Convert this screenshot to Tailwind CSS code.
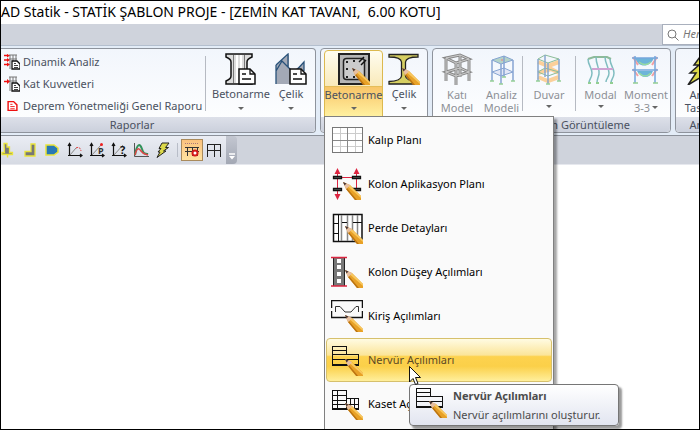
<!DOCTYPE html>
<html lang="tr">
<head>
  <meta charset="UTF-8" />
  <meta name="viewport" content="width=device-width, initial-scale=1.0"/>
  <title>STATİK ŞABLON PROJE</title>
  <script src="https://cdn.jsdelivr.net/npm/@tailwindcss/browser@4"></script>
</head>
<body class="bg-white font-['Noto_Sans','Open_Sans',sans-serif] text-[11px] text-[#4a5160]">

  <!-- shared shapes -->
  <svg class="hidden">
    <symbol id="pencil" viewBox="0 0 18 18">
      <path d="M0 0L7 3L18 14V18H12L3 7Z" fill="#e8a127"/>
      <path d="M6.500 3L18 14V16L5 4.500Z" fill="#f8c860"/>
      <path d="M3 7L12 18H14L4 6Z" fill="#bb7412"/>
      <path d="M0 0L7 3L5.500 5L3 7Z" fill="#e6bfa2"/>
      <path d="M0 0L3.500 1.500L1.500 3.500Z" fill="#4a3636"/>
    </symbol>
    <symbol id="doc" viewBox="0 0 18 17">
      <path d="M1 1H12L17 6V16H1Z" fill="#fff" stroke="#111" stroke-width="1.500"/>
      <path d="M12 1V6H17M4 6H8M4 11H13" fill="none" stroke="#111" stroke-width="1.300"/>
    </symbol>
    <symbol id="smalldoc" viewBox="0 0 10 10">
      <path d="M1 1H6L9 4V9H1Z" fill="#fff" stroke="currentColor" stroke-width="1.300"/>
      <path d="M3 3.500H5M3 5.500H7M3 7.500H7" stroke="currentColor" stroke-width="0.800"/>
    </symbol>
    <symbol id="ribs" viewBox="0 0 32 32">
      <path d="M1 2H15V21H1ZM1 6H15M1 10H27M1 14H27M15 10H27V21" fill="none" stroke="#111" stroke-width="1" transform="translate(.5 .5)" shape-rendering="crispEdges"/>
      <path d="M2 15H15V20H2Z" fill="#fff"/>
      <path d="M15.500 10V21" stroke="#fff" transform="translate(0 1)" opacity="0.600"/>
      <path d="M1 21H28" stroke="#111" stroke-width="2"/>
      <use href="#pencil" x="14" y="15" width="18" height="18"/>
    </symbol>
    <symbol id="axes" viewBox="0 0 16 16">
      <path d="M2.500 2V13.500H15M1 4L2.500 1.500L4 4M13 12L15 13.500L13 15M1 13.500H4" fill="none" stroke="#111" stroke-width="1.200"/>
    </symbol>
    <symbol id="bolt" viewBox="0 0 16 16">
      <path d="M7 1H14L10.500 5.500H13.500L8.500 9H11L2 15.500L5 10H3L6 6.500H4Z" fill="#dcd94a" stroke="#222" stroke-width="1"/>
    </symbol>
    <symbol id="arrow" viewBox="0 0 6 3"><path d="M0 0H6L3 3Z" fill="#666"/></symbol>
  </svg>

  <div class="flex h-screen flex-col overflow-hidden border border-black">
    <header class="h-[23px] shrink-0 text-sm leading-[21px] whitespace-pre text-black">AD Statik - STATİK ŞABLON PROJE - [ZEMİN KAT TAVANI,  6.00 KOTU]</header>

    <div class="flex h-[22px] shrink-0 justify-end border-b border-[#b4bfce] bg-[#cfd3dc]">
      <label class="flex w-[37px] items-center gap-1 overflow-hidden border border-r-0 border-[#a9b0bd] bg-white pl-1">
        <svg class="size-3 shrink-0" viewBox="0 0 12 12" fill="none" stroke="#777"><circle cx="5" cy="5" r="4"/><path d="M8 8L11.500 11.500"/></svg>
        <input type="text" aria-label="Ara" placeholder="Herhangi" class="w-16 shrink-0 italic placeholder:text-[#777]">
      </label>
    </div>

    <!-- ribbon -->
    <div class="flex shrink-0 gap-1 overflow-x-clip border-b border-[#8b9099] bg-[#e3ecf7] pt-[2px] pb-[2px]">
      <section class="flex h-[85px] w-[315px] shrink-0 flex-col rounded-r border border-l-0 border-[#8e939c] bg-gradient-to-b from-[#f2f6fc] to-white">
        <div class="flex grow">
          <div class="flex w-[204px] flex-col pt-[2px] pl-[3px]">
            <button class="flex h-[22px] items-center gap-[3px] whitespace-nowrap">
              <svg class="size-4 shrink-0" viewBox="0 0 16 16"><path d="M5 1H13M6 1V15M9 1V8M12 1V8M5 5H13" stroke="#777" fill="none"/><path d="M0 1.500H4M0 6H4M0 10.500H4" stroke="#e11" stroke-width="1.500"/><path d="M3 0L6 1.500L3 3.500ZM3 4L6 6L3 8ZM3 8.500L6 10.500L3 12.500Z" fill="#e11"/><use href="#smalldoc" x="7" y="6" width="10" height="10" color="#111"/></svg>
              Dinamik Analiz
            </button>
            <button class="flex h-[22px] items-center gap-[3px] whitespace-nowrap">
              <svg class="size-4 shrink-0" viewBox="0 0 16 16"><path d="M5 1H13M6 1V15M9 1V8M12 1V8M5 5H13" stroke="#777" fill="none"/><path d="M0 5.500H4" stroke="#e11" stroke-width="1.500"/><path d="M3 3L6 5.500L3 8Z" fill="#e11"/><use href="#smalldoc" x="7" y="6" width="10" height="10" color="#111"/></svg>
              Kat Kuvvetleri
            </button>
            <button class="flex h-[22px] items-center gap-[3px] whitespace-nowrap">
              <svg class="size-4 shrink-0" viewBox="0 0 16 16"><use href="#smalldoc" x="3" y="2" width="11" height="12" color="#e11"/></svg>
              Deprem Yönetmeliği Genel Raporu
            </button>
          </div>
          <div class="mt-[7px] h-[55px] w-px bg-[#b6bac2]"></div>
          <button class="flex w-[70px] flex-col items-center pt-1">
            <svg class="size-8" viewBox="0 0 32 32"><path d="M1 1H27V4Q22 6 22 9V23Q22 26 27 28V31H1V28Q6 26 6 23V9Q6 6 1 4Z" fill="#ddd" stroke="#111" stroke-width="1.500"/><path d="M8.500 2V30M19.500 2V30" stroke="#777"/><path d="M12 2V30M16 2V30" stroke="#fff" stroke-width="2"/><use href="#doc" x="13" y="15" width="18" height="17"/></svg>
            <span class="leading-[18px]">Betonarme</span>
            <svg class="mt-1 h-[3px] w-[6px]"><use href="#arrow"/></svg>
          </button>
          <button class="flex w-[30px] flex-col items-center pt-1">
            <svg class="size-8" viewBox="0 0 32 32"><path d="M1 31V12L14 1V31ZM12 13L18 18L29 10V31H6Z" fill="#a3a9b6"/><path d="M1 12L13 1V14M1 18L7 8L19 20L29 9V18M1 12V31" fill="none" stroke="#29527a" stroke-width="1.300"/><use href="#doc" x="14" y="15" width="18" height="17"/></svg>
            <span class="leading-[18px]">Çelik</span>
            <svg class="mt-1 h-[3px] w-[6px]"><use href="#arrow"/></svg>
          </button>
        </div>
        <h2 class="h-[15px] rounded-br bg-gradient-to-b from-[#dde0e9] to-[#cbd0dc] pr-[52px] text-center leading-[15px]">Raporlar</h2>
      </section>

      <section class="flex h-[85px] w-[108px] shrink-0 flex-col rounded border border-[#8e939c] bg-gradient-to-b from-[#f2f6fc] to-white">
        <div class="flex grow pl-[3px]">
          <div class="relative mt-px">
            <button class="flex h-[67px] w-[59px] flex-col items-center rounded-t border border-[#dcb94f] bg-linear-to-b from-[#fffdf0] from-0% via-[#f9e9b8] via-55% to-[#fbe9a0] pt-[2px]">
              <svg class="size-8 shrink-0" viewBox="0 0 32 32"><path d="M1 1H31V31H1Z" fill="#b5b5b5" stroke="#222" stroke-width="2"/><rect x="5.500" y="5.500" width="21" height="21" rx="3" fill="#ccc" stroke="#222" stroke-width="1.500"/><path d="M21 9L26 4M23 12L28 7" stroke="#111" stroke-width="1.500"/><path d="M8 8H10V10H8ZM15 7H17V9H15ZM8 15H10V17H8ZM8 23H10V25H8ZM15 23H17V25H15Z" fill="#222"/><use href="#pencil" x="14" y="15" width="18" height="18"/></svg>
              <span class="mt-px flex w-[57px] grow flex-col items-center border-t border-[#e4bd5a] bg-gradient-to-b from-[#f8c568] to-[#fff1a0] leading-4">Betonarme<svg class="mt-1 h-[3px] w-[6px]"><use href="#arrow"/></svg></span>
            </button>

            <!-- dropdown -->
            <div role="menu" class="absolute top-[66px] left-0 z-10 flex w-[230px] flex-col border border-[#808080] bg-[#fafafa] px-px pt-px pb-3 text-black shadow-[3px_3px_2px_rgba(0,0,0,0.35)]">
              <button role="menuitem" class="flex h-11 items-center gap-[5px] pl-[5px]">
                <svg class="size-8" viewBox="0 0 32 32" shape-rendering="crispEdges"><path d="M1.500 3.500H31.500V28.500H1.500Z" fill="#fff"/><path d="M2 9.500H31M2 22.500H31M9.500 4V28M24.500 4V28" stroke="#ccc"/><path d="M2 16.500H31M16.500 4V28" stroke="#888"/><path d="M1.500 3.500H31.500V28.500H1.500Z" fill="none" stroke="#777"/></svg>
                Kalıp Planı
              </button>
              <button role="menuitem" class="flex h-11 items-center gap-[5px] pl-[5px]">
                <svg class="size-8" viewBox="0 0 32 32"><path d="M6.500 2V30M25.500 2V22M6 9.500H26" stroke="#dc2440" stroke-width="1"/><path d="M3.500 6L6.500 0L9.500 6ZM22.500 6L25.500 0L28.500 6ZM3.500 26L6.500 32L9.500 26Z" fill="#dc2440"/><path d="M2.500 8.500H10.500V10.500H2.500ZM21.500 8.500H29.500V10.500H21.500ZM2.500 20.500H10.500V22.500H2.500ZM21.500 20.500H29.500V22.500H21.500Z" fill="#777" stroke="#111" stroke-width="1.300"/><use href="#pencil" x="12" y="14" width="18" height="18"/></svg>
                Kolon Aplikasyon Planı
              </button>
              <button role="menuitem" class="flex h-11 items-center gap-[5px] pl-[5px]">
                <svg class="size-8" viewBox="0 0 32 32"><path d="M2.500 2.500H31V29.500H2.500Z" fill="#fff" stroke="#111" stroke-width="1.500"/><path d="M10.500 3V29M16.500 3V29M21.500 3V29M26.500 3V29" stroke="#888" stroke-width="1.500"/><path d="M7.500 3V29M3 11.500H7M3 21.500H7M11 10.500H16M22 10.500H31" stroke="#111"/><use href="#pencil" x="14" y="14" width="18" height="18"/></svg>
                Perde Detayları
              </button>
              <button role="menuitem" class="flex h-11 items-center gap-[5px] pl-[5px]">
                <svg class="size-8" viewBox="0 0 32 32"><path d="M2 1H14V30H2Z" fill="#777"/><path d="M2.500 1V30M13.500 1V30" stroke="#222"/><path d="M6 3H10V7H6ZM6 9H10V13H6ZM6 16H10V20H6ZM6 23H10V27H6Z" fill="#fff"/><path d="M0 1.500H16M0 30H16" stroke="#dc2440" stroke-width="1.500"/><use href="#pencil" x="14" y="14" width="18" height="18"/></svg>
                Kolon Düşey Açılımları
              </button>
              <button role="menuitem" class="flex h-11 items-center gap-[5px] pl-[5px]">
                <svg class="size-8" viewBox="0 0 32 32" fill="none" stroke="#111"><path d="M.5 8V.5H31.500V8M.5 11V17.500H31.500V11" stroke-width="1.500"/><path d="M4.500 12V6.500H9L14 12H20L25 6.500H27.500V12" stroke="#333"/><use href="#pencil" x="14" y="15" width="18" height="18" stroke="none"/></svg>
                Kiriş Açılımları
              </button>
              <button role="menuitem" class="flex h-11 items-center gap-[5px] rounded-sm border border-[#d6c06c] bg-[linear-gradient(to_bottom,#fffbe2_0%,#fbe59a_38%,#fdd24e_42%,#fbd049_65%,#ffef9c_100%)] pl-1 text-[#5c4a25]">
                <svg class="size-8" viewBox="0 0 32 32"><path d="M1.500 2.500H15.500V10.500H27.500V21M1.500 2V21M1 6.500H15M1 10.500H16M1 15.500H27" fill="none" stroke="#111" shape-rendering="crispEdges"/><path d="M1 21H28" stroke="#111" stroke-width="2"/><use href="#pencil" x="14" y="15" width="18" height="18"/></svg>
                Nervür Açılımları
              </button>
              <button role="menuitem" class="flex h-11 items-center gap-[5px] pl-[5px]">
                <svg class="size-8" viewBox="0 0 32 32"><path d="M1.500 2.500H15.500V21.500H1.500ZM1 7.500H15M1 12.500H15M16 10.500H27.500V21.500M1 16.500H27M6.500 2V21M19.500 11V21M23.500 11V21" fill="none" stroke="#111" shape-rendering="crispEdges"/><path d="M1 21H28" stroke="#111" stroke-width="2"/><use href="#pencil" x="14" y="15" width="18" height="18"/></svg>
                Kaset Açılımları
              </button>
            </div>

            <!-- tooltip and pointer lie over the menu -->
            <div role="tooltip" class="absolute top-[334px] left-[85px] z-20 flex h-[42px] w-[210px] items-start gap-[6px] rounded-sm border border-[#767676] bg-gradient-to-b from-white to-[#e2e5f0] pt-px pl-[5px] whitespace-nowrap text-[#4c4c4c] shadow-[3px_3px_2px_rgba(0,0,0,0.4)]">
              <svg class="size-8 shrink-0" viewBox="0 0 32 32"><path d="M1.500 2.500H15.500V10.500H27.500V21M1.500 2V21M1 6.500H15M1 10.500H16M1 15.500H27" fill="none" stroke="#111" shape-rendering="crispEdges"/><path d="M1 21H28" stroke="#111" stroke-width="2"/><use href="#pencil" x="14" y="15" width="18" height="18"/></svg>
              <div class="leading-[19px]">
                <p class="font-bold">Nervür Açılımları</p>
                <p>Nervür açılımlarını oluşturur.</p>
              </div>
            </div>
            <svg class="absolute top-[316px] left-[85px] z-30 h-[19px] w-3" viewBox="0 0 12 19"><path d="M.5 .5V16L4 12.500L6.500 18.500L9 17.500L6.500 11.500H11.500Z" fill="#fff" stroke="#111"/></svg>
          </div>
          <button class="flex w-[42px] flex-col items-center pt-1">
            <svg class="size-8" viewBox="0 0 32 32"><path d="M1 1.500H30V4Q18 4 17.500 9V23Q18 28 30 28.500V31H1V28.500Q13 28 13.500 23V9Q13 4 1 4Z" fill="#d6cf62" stroke="#222" stroke-width="1.300"/><use href="#pencil" x="14" y="15" width="18" height="18"/></svg>
            <span class="leading-[18px]">Çelik</span>
            <svg class="mt-1 h-[3px] w-[6px]"><use href="#arrow"/></svg>
          </button>
        </div>
        <div class="h-[15px] rounded-b bg-gradient-to-b from-[#dde0e9] to-[#cbd0dc]"></div>
      </section>

      <section class="flex h-[85px] w-[239px] shrink-0 flex-col rounded border border-[#8e939c] bg-gradient-to-b from-[#f2f6fc] to-white">
        <div class="flex grow text-[#8d9096]">
          <button disabled class="flex w-12 flex-col items-center pt-1 leading-[13px]">
            <svg class="size-8" viewBox="0 0 32 32" fill="none"><path d="M5 5L19 2L28 6L15 10ZM5 19L19 15L28 19L15 23ZM5 5V28M15 10V32M28 6V28M19 2V24" stroke="#888" stroke-width="3"/><path d="M5 5L19 2L28 6L15 10ZM5 19L19 15L28 19L15 23ZM5 5V28M15 10V32M28 6V28M19 2V24" stroke="#ccc" stroke-width="1"/></svg>
            <span class="mt-[3px]">Katı<br>Model</span>
          </button>
          <button disabled class="flex w-[41px] flex-col items-center pt-1 leading-[13px]">
            <svg class="size-8" viewBox="0 0 32 32" fill="none" stroke="#86a4d2"><path d="M6 7L18 3L27 7L15 11Z" fill="#b4d3c8"/><path d="M6 19L18 15L27 19L15 23Z" fill="#e2e6f6"/><path d="M6 7V28M15 11V31M27 7V28M18 3V24" stroke-width="1.500"/><path d="M4 28H8M13 31H17M25 28H29M16 24H20" stroke="#96cf96" stroke-width="1.500"/><circle cx="16" cy="7" r=".5" stroke="#e88"/></svg>
            <span class="mt-[3px]">Analiz<br>Modeli</span>
          </button>
          <div class="mt-[7px] h-[55px] w-px bg-[#b6bac2]"></div>
          <button disabled class="flex w-[52px] flex-col items-center pt-1 leading-[13px]">
            <svg class="size-8" viewBox="0 0 32 32" fill="none"><path d="M5 9L15 13L26 9M5 24L15 28L26 24M5 20L18 16L26 20" stroke="#fbd09a" stroke-width="4"/><path d="M5 6L15 10L26 6L12 2ZM5 19L15 23L26 19L12 15Z" stroke="#8bbd98"/><path d="M5 6V28M15 10V31M26 6V28M12 2V24" stroke="#88a7ce" stroke-width="1.500"/><path d="M3 28H7M13 31H17M24 28H28" stroke="#96cf96" stroke-width="1.500"/></svg>
            <span class="mt-[3px]">Duvar</span>
            <svg class="mt-1 h-[3px] w-[6px]"><use href="#arrow"/></svg>
          </button>
          <div class="mt-[7px] h-[55px] w-px bg-[#b6bac2]"></div>
          <button disabled class="flex w-[49px] flex-col items-center pt-1 leading-[13px]">
            <svg class="size-8" viewBox="0 0 32 32" fill="none"><path d="M3 6L9 4H22L26 6" stroke="#8dbb9a" stroke-width="2"/><path d="M3 6C3 12 7 15 7 20C7 25 4 26 4 30M11 4C11 12 15 16 14 21S12 26 12 30M20 4C20 10 24 15 24 20S21 25 21 29M25 6C25 12 29 15 29 20S26 26 26 30" stroke="#80bdc0" stroke-width="1.500"/><path d="M7 16H28" stroke="#cfa3d3" stroke-width="2"/><path d="M3 30H6M11 30H14M25 30H28" stroke="#92ce92" stroke-width="2"/></svg>
            <span class="mt-[3px]">Modal</span>
            <svg class="mt-1 h-[3px] w-[6px]"><use href="#arrow"/></svg>
          </button>
          <button disabled class="flex w-[42px] flex-col items-center pt-1 leading-[13px]">
            <svg class="size-8" viewBox="0 0 32 32" fill="none"><path d="M5 5C8 15 20 15 24 5ZM7 18C11 26 20 26 23 18Z" fill="#6db4d9"/><path d="M9 9Q15 14 21 9M9 20Q15 26 21 20" stroke="#98dba1" stroke-width="1.500"/><path d="M3 4L8 12M27 4L22 12M3 16L8 23M27 16L22 23" stroke="#f4a0a0" stroke-width="2"/><path d="M5 3V30M25 3V30M2 5H28M2 17H28" stroke="#75a7dc" stroke-width="1.500"/><path d="M3 30H8M23 30H28" stroke="#92ce92" stroke-width="1.500"/></svg>
            <span class="mt-[3px]">Moment</span>
            <span class="flex items-center gap-[2px]">3-3<svg class="h-[3px] w-[6px]"><use href="#arrow"/></svg></span>
          </button>
        </div>
        <h2 class="h-[15px] rounded-b bg-gradient-to-b from-[#dde0e9] to-[#cbd0dc] pr-10 text-right leading-[15px] whitespace-nowrap">Sistem Görüntüleme</h2>
      </section>

      <section class="flex h-[85px] w-[60px] shrink-0 flex-col rounded border border-[#8e939c] bg-gradient-to-b from-[#f2f6fc] to-white">
        <button class="flex grow flex-col items-center pt-1 leading-[13px]">
          <svg class="h-8 w-10" viewBox="0 0 40 32"><path d="M18 0H36L27 10H34L22 17H28L3 32L11 20H5L14 12H9Z" fill="#dcd94a" stroke="#222" stroke-width="1.500"/></svg>
          <span class="mt-[3px]">Analiz<br>Tasarım</span>
        </button>
        <h2 class="h-[15px] rounded-b bg-gradient-to-b from-[#dde0e9] to-[#cbd0dc] text-center leading-[15px]">Analiz</h2>
      </section>
    </div>

    <!-- toolbar -->
    <div class="flex h-[28px] shrink-0 bg-[#cfd3dc]">
      <div class="flex items-center gap-[6px] bg-gradient-to-b from-[#eaedf4] to-[#d6dae3] pr-1">
        <button aria-label="Kolon"><svg class="block size-4" viewBox="0 0 16 16"><path d="M3 1.500H6V5H8.500V10.500H11.500V12.500H1V10.500H3.500Z" fill="#777" stroke="#e9e43a" stroke-width="1.300"/><path d="M6.500 12V15.500" stroke="#e9e43a" stroke-width="1.500"/></svg></button>
        <button aria-label="Köşe"><svg class="block size-4" viewBox="0 0 16 16"><path d="M8 2H12V14H2V9.500H8Z" fill="#777" stroke="#e9e43a" stroke-width="1.300"/></svg></button>
        <button aria-label="Döşeme"><svg class="block size-4" viewBox="0 0 16 16"><path d="M1 3H9L13 6V10L9 13H1Z" fill="#2878b4" stroke="#e9e43a" stroke-width="1.500"/></svg></button>
        <button aria-label="Grafik"><svg class="block size-4" viewBox="0 0 16 16"><use href="#axes"/><path d="M3 13L9 6" stroke="#888"/><path d="M9 6Q13 4 14 9" stroke="#d33" fill="none" stroke-dasharray="2 1"/></svg></button>
        <button aria-label="Grafik P"><svg class="block size-4" viewBox="0 0 16 16"><use href="#axes"/><path d="M3 13L12 3" stroke="#888"/><circle cx="12.500" cy="2.500" r="1.500" fill="#e22"/><text x="9" y="12" font-size="9" font-weight="bold" fill="#333">P</text></svg></button>
        <button aria-label="Grafik sorgu"><svg class="block size-4" viewBox="0 0 16 16"><use href="#axes"/><path d="M3 13L12 3" stroke="#888"/><text x="9" y="12" font-size="11" font-weight="bold" fill="#111">?</text></svg></button>
        <button aria-label="Spektrum"><svg class="block size-4" viewBox="0 0 16 16" fill="none"><path d="M1.500 1V14.500H16" stroke="#555"/><path d="M2 13C4 1 7 1 9 7S12 11 15 12" stroke="#31915a" stroke-width="2"/><path d="M2 13C4 5 6 6 8 9S12 12 15 13" stroke="#d44" stroke-width="1.500"/></svg></button>
        <button aria-label="Analiz"><svg class="block size-4"><use href="#bolt"/></svg></button>
        <div class="h-[14px] w-px bg-[#b8bdc8]"></div>
        <button aria-label="Aks" class="-mx-[3px] border border-[#a98a5c] bg-gradient-to-b from-[#fbc27e] to-[#ffe2a0] p-[2px]"><svg class="block size-4" viewBox="0 0 16 16"><path d="M1 1.500H15" stroke="#a77" stroke-dasharray="1 1"/><path d="M1 5.500H15M3.500 5V14M8.500 5V14M13.500 5V14M1 9.500H15" stroke="#333" fill="none"/><circle cx="11" cy="11" r="2.500" fill="#fff" stroke="#d31818" stroke-width="2"/></svg></button>
        <button aria-label="Izgara"><svg class="block size-4" viewBox="0 0 16 16"><path d="M1 2.500H15M1.500 2V15M8.500 2V15M14.500 2V15M1 8.500H15" stroke="#222" fill="none" shape-rendering="crispEdges"/></svg></button>
      </div>
      <button aria-label="Diğer" class="flex w-[11px] items-end justify-center rounded-r bg-gradient-to-b from-[#c3c7d1] to-[#a3a8b4] pb-1"><svg class="h-[7px] w-[6px]" viewBox="0 0 6 7"><path d="M0 1H6" stroke="#fff" stroke-width="1.500"/><path d="M0 3H6L3 6.500Z" fill="#fff"/></svg></button>
    </div>

    <main class="grow border-t border-[#e6e8ee] bg-white"></main>
  </div>
</body>
</html>
